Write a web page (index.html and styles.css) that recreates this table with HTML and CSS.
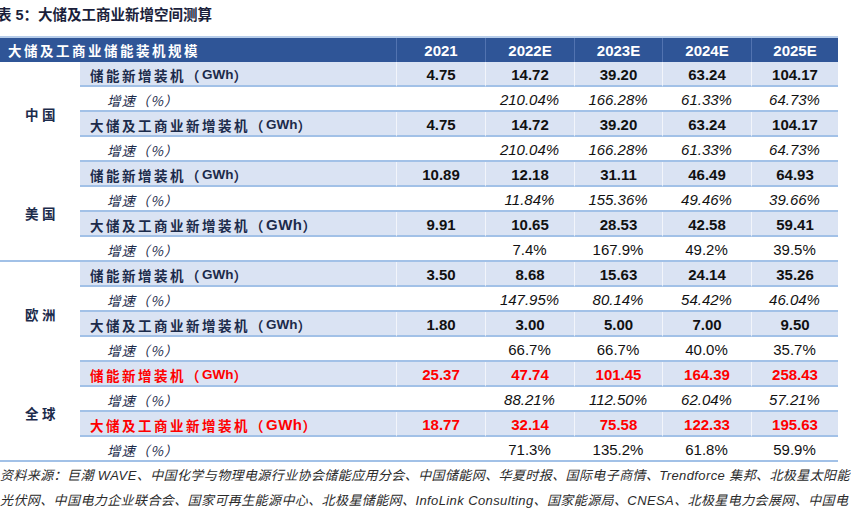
FILE: index.html
```html
<!DOCTYPE html>
<html lang="zh">
<head>
<meta charset="utf-8">
<title>大储及工商业新增空间测算</title>
<link rel="stylesheet" href="styles.css">
</head>
<body>
<div class="title">表 5：大储及工商业新增空间测算</div>
<div class="table">
  <div class="hd hlabel">大储及工商业储能装机规模</div>
  <div class="hd yr">2021</div>
  <div class="hd yr">2022E</div>
  <div class="hd yr">2023E</div>
  <div class="hd yr">2024E</div>
  <div class="hd yr">2025E</div>

  <div class="reg">中国</div>
  <div class="cell lab b">储能新增装机（<span class="u">GWh</span>）</div>
  <div class="cell val bold b">4.75</div><div class="cell val bold b">14.72</div><div class="cell val bold b">39.20</div><div class="cell val bold b">63.24</div><div class="cell val bold b">104.17</div>
  <div class="cell gr">增速（%）</div>
  <div class="cell val"></div><div class="cell val it">210.04%</div><div class="cell val it">166.28%</div><div class="cell val it">61.33%</div><div class="cell val it">64.73%</div>
  <div class="cell lab b">大储及工商业新增装机（<span class="u">GWh</span>）</div>
  <div class="cell val bold b">4.75</div><div class="cell val bold b">14.72</div><div class="cell val bold b">39.20</div><div class="cell val bold b">63.24</div><div class="cell val bold b">104.17</div>
  <div class="cell gr">增速（%）</div>
  <div class="cell val"></div><div class="cell val it">210.04%</div><div class="cell val it">166.28%</div><div class="cell val it">61.33%</div><div class="cell val it">64.73%</div>

  <div class="reg sep">美国</div>
  <div class="cell lab b">储能新增装机（<span class="u">GWh</span>）</div>
  <div class="cell val bold b">10.89</div><div class="cell val bold b">12.18</div><div class="cell val bold b">31.11</div><div class="cell val bold b">46.49</div><div class="cell val bold b">64.93</div>
  <div class="cell gr">增速（%）</div>
  <div class="cell val"></div><div class="cell val it">11.84%</div><div class="cell val it">155.36%</div><div class="cell val it">49.46%</div><div class="cell val it">39.66%</div>
  <div class="cell lab b">大储及工商业新增装机（<span class="u wide">GWh</span>）</div>
  <div class="cell val bold b">9.91</div><div class="cell val bold b">10.65</div><div class="cell val bold b">28.53</div><div class="cell val bold b">42.58</div><div class="cell val bold b">59.41</div>
  <div class="cell gr">增速（%）</div>
  <div class="cell val"></div><div class="cell val">7.4%</div><div class="cell val">167.9%</div><div class="cell val">49.2%</div><div class="cell val">39.5%</div>

  <div class="reg">欧洲</div>
  <div class="cell lab b">储能新增装机（<span class="u">GWh</span>）</div>
  <div class="cell val bold b">3.50</div><div class="cell val bold b">8.68</div><div class="cell val bold b">15.63</div><div class="cell val bold b">24.14</div><div class="cell val bold b">35.26</div>
  <div class="cell gr">增速（%）</div>
  <div class="cell val"></div><div class="cell val it">147.95%</div><div class="cell val it">80.14%</div><div class="cell val it">54.42%</div><div class="cell val it">46.04%</div>
  <div class="cell lab b">大储及工商业新增装机（<span class="u">GWh</span>）</div>
  <div class="cell val bold b">1.80</div><div class="cell val bold b">3.00</div><div class="cell val bold b">5.00</div><div class="cell val bold b">7.00</div><div class="cell val bold b">9.50</div>
  <div class="cell gr">增速（%）</div>
  <div class="cell val"></div><div class="cell val">66.7%</div><div class="cell val">66.7%</div><div class="cell val">40.0%</div><div class="cell val">35.7%</div>

  <div class="reg sep">全球</div>
  <div class="cell lab b red">储能新增装机（<span class="u">GWh</span>）</div>
  <div class="cell val bold b red">25.37</div><div class="cell val bold b red">47.74</div><div class="cell val bold b red">101.45</div><div class="cell val bold b red">164.39</div><div class="cell val bold b red">258.43</div>
  <div class="cell gr">增速（%）</div>
  <div class="cell val"></div><div class="cell val it">88.21%</div><div class="cell val it">112.50%</div><div class="cell val it">62.04%</div><div class="cell val it">57.21%</div>
  <div class="cell lab b red">大储及工商业新增装机（<span class="u wide">GWh</span>）</div>
  <div class="cell val bold b red">18.77</div><div class="cell val bold b red">32.14</div><div class="cell val bold b red">75.58</div><div class="cell val bold b red">122.33</div><div class="cell val bold b red">195.63</div>
  <div class="cell gr">增速（%）</div>
  <div class="cell val"></div><div class="cell val">71.3%</div><div class="cell val">135.2%</div><div class="cell val">61.8%</div><div class="cell val">59.9%</div>
</div>
<div class="foot">
  <div class="line">资料来源：巨潮 WAVE、中国化学与物理电源行业协会储能应用分会、中国储能网、华夏时报、国际电子商情、Trendforce 集邦、北极星太阳能</div>
  <div class="line">光伏网、中国电力企业联合会、国家可再生能源中心、北极星储能网、InfoLink Consulting、国家能源局、CNESA、北极星电力会展网、中国电</div>
</div>
</body>
</html>
```
FILE: styles.css
```css
* { box-sizing: border-box; }
html, body { margin: 0; padding: 0; background: #fff; }
body {
  width: 851px;
  height: 515px;
  overflow: hidden;
  font-family: "Liberation Sans", "Noto Sans CJK SC", sans-serif;
  color: #111;
}
.title {
  height: 36px;
  padding-top: 7px;
  margin-left: -3px;
  font-size: 14.5px;
  line-height: 17px;
  font-weight: bold;
  color: #1b1f3b;
  white-space: nowrap;
}
.table {
  display: grid;
  width: 838px;
  grid-template-columns: 80px 316px 89px 89px 88px 89px 87px;
  grid-template-rows: 24px repeat(16, 25px);
  border-top: 2px solid #b7cdea;
}
.hd {
  background: #2f5597;
  color: #fff;
  font-weight: bold;
  display: flex;
  align-items: center;
}
.hlabel {
  grid-column: span 2;
  padding-left: 8px;
  font-size: 13.5px;
  letter-spacing: 2.5px;
}
.yr {
  justify-content: center;
  font-size: 15px;
  border-left: 1px solid #5273b0;
}
.reg {
  grid-column: 1;
  grid-row: span 4;
  display: flex;
  align-items: center;
  padding-left: 25px;
  padding-top: 3px;
  font-size: 13.5px;
  letter-spacing: 3.5px;
  font-weight: bold;
  color: #1c2b4b;
}
.reg.sep { border-bottom: 2px solid #a2c1e7; }
.cell {
  display: flex;
  align-items: center;
  border-bottom: 2px solid #a2c1e7;
  padding-top: 2px;
  white-space: nowrap;
}
.lab {
  padding-left: 10px;
  font-weight: bold;
  font-size: 13.5px;
  letter-spacing: 2.5px;
  color: #1c2b4b;
}
.u { letter-spacing: 0; }
.u.wide { font-size: 15px; letter-spacing: 0.5px; }
.gr {
  padding-left: 27px;
  font-family: "Noto Sans CJK SC", sans-serif;
  font-style: italic;
  font-size: 13.5px;
  letter-spacing: 1px;
  color: #1c2b4b;
}
.val {
  justify-content: center;
  font-size: 15px;
  color: #111;
}
.bold { font-weight: bold; }
.it { font-style: italic; }
.b { background: #dae3f3; }
.val.b { border-left: 1px solid #f2f5fb; }
.red { color: #ff0000; }
.foot {
  padding-top: 1px;
  font-family: "Liberation Sans Narrow", "Liberation Sans", "Noto Sans CJK SC", sans-serif;
  font-style: italic;
  font-size: 13px;
  line-height: 25px;
  letter-spacing: 0.4px;
  color: #2b2b2b;
}
.line { white-space: nowrap; overflow: hidden; }
```
